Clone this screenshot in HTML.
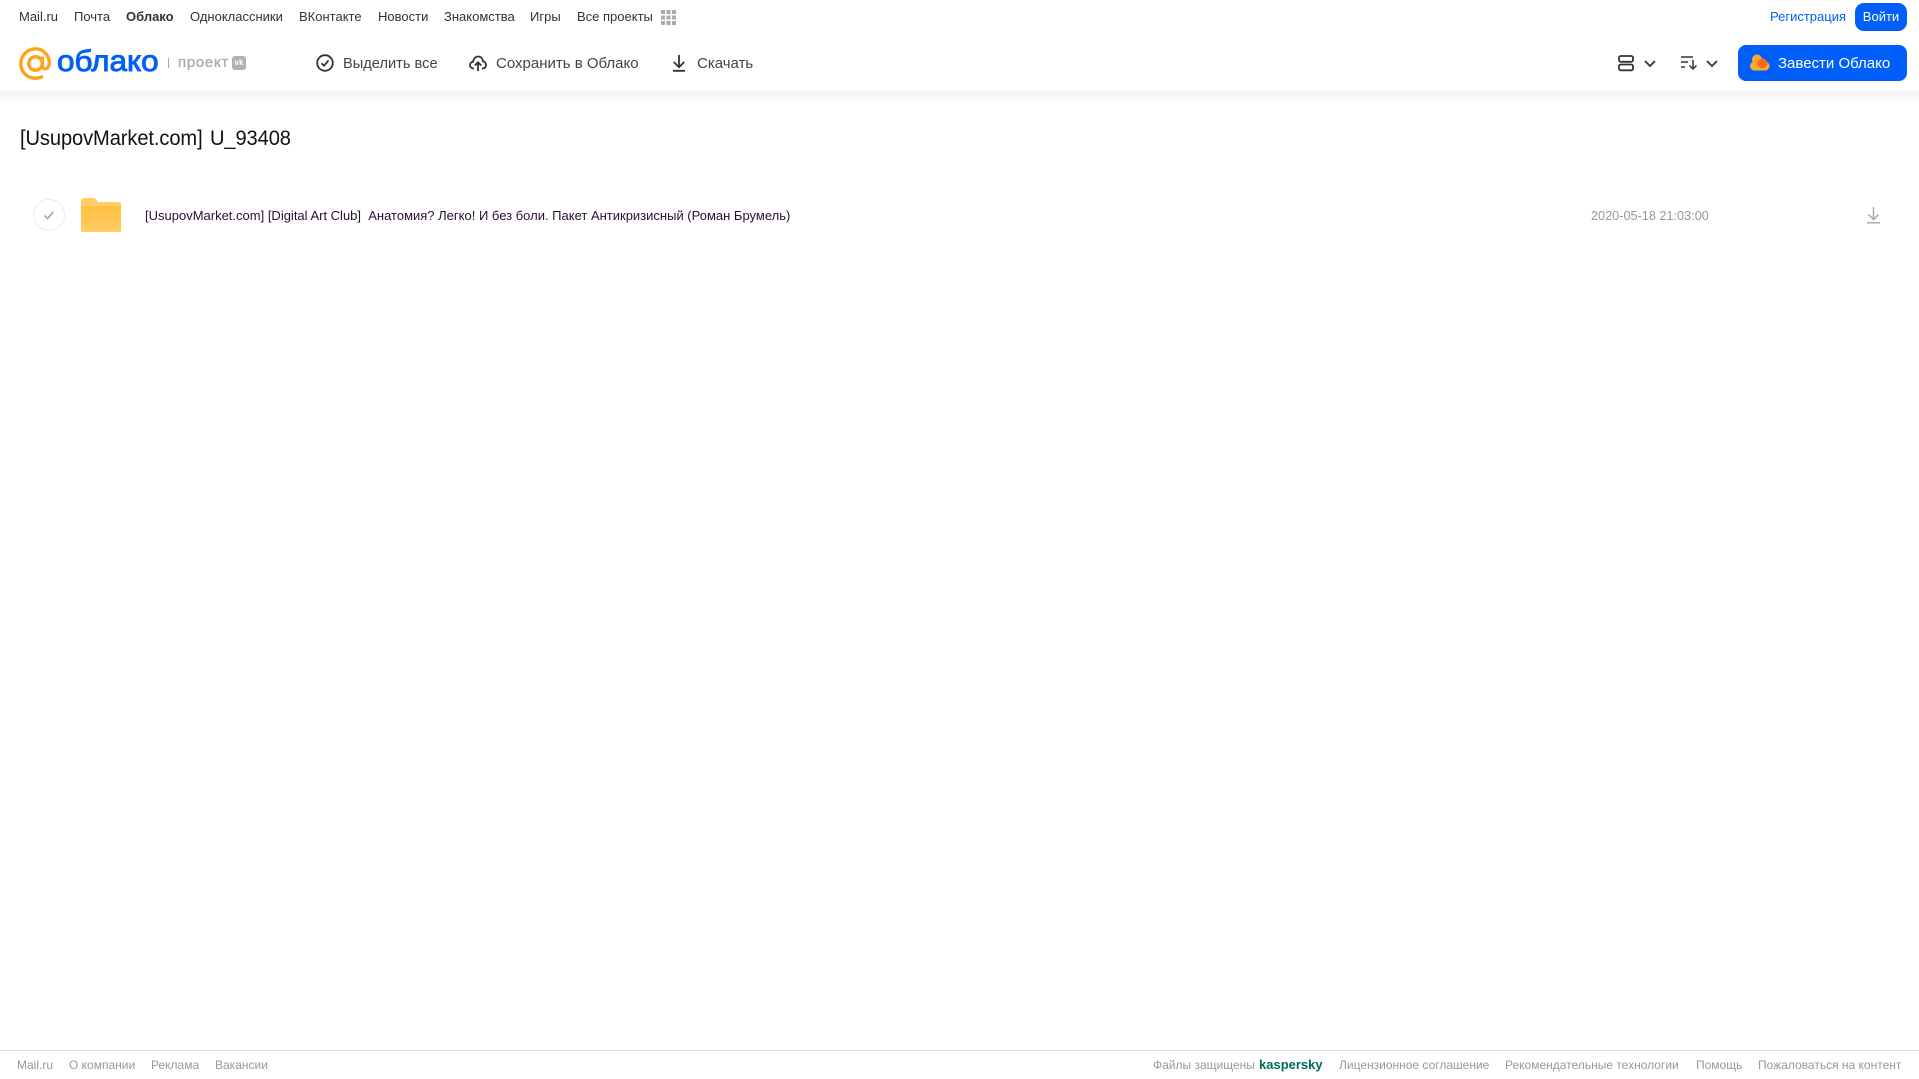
<!DOCTYPE html>
<html lang="ru"><head><meta charset="utf-8"><title>Облако</title>
<style>
html,body{margin:0;padding:0;background:#fff}
body{width:1919px;height:1079px;position:relative;overflow:hidden;font-family:"Liberation Sans",sans-serif}
.t{position:absolute;white-space:nowrap;transform-origin:0 50%;line-height:20px}
.n{top:7px;font-size:13px;color:#333}
.b{top:54px;font-size:15px;color:#444}
.f{top:1055px;font-size:12px;color:#999}
svg{position:absolute;overflow:visible}
</style></head><body>
<div style="position:absolute;left:0;top:91px;width:1919px;height:12px;background:linear-gradient(#f4f4f4,#fff)"></div>

<span class="t n" style="left:19px">Mail.ru</span>
<span class="t n" style="left:74px">Почта</span>
<span class="t n" style="left:126px;font-weight:bold">Облако</span>
<span class="t n" style="left:190px">Одноклассники</span>
<span class="t n" style="left:299px">ВКонтакте</span>
<span class="t n" style="left:378px">Новости</span>
<span class="t n" style="left:444px">Знакомства</span>
<span class="t n" style="left:530px">Игры</span>
<span class="t n" style="left:577px">Все проекты</span>
<svg style="left:661px;top:10px" width="15" height="15" fill="#aaa"><rect width="4" height="4"/><rect x="5.500" width="4" height="4"/><rect x="11" width="4" height="4"/><rect y="5.500" width="4" height="4"/><rect x="5.500" y="5.500" width="4" height="4"/><rect x="11" y="5.500" width="4" height="4"/><rect y="11" width="4" height="4"/><rect x="5.500" y="11" width="4" height="4"/><rect x="11" y="11" width="4" height="4"/></svg>

<svg style="left:19px;top:47px" width="33" height="33" viewBox="0 0 33 33" fill="none" stroke="#ffa31a" stroke-width="3.400"><circle cx="16.500" cy="16.500" r="6.800"/><path d="M23.300 9.500v9c0 5 7 4.500 7-2.500C30.300 8 24 1.800 16.500 1.800S1.800 8 1.800 16.500 8 31.200 16.500 31.200c3 0 5.300-.8 7.300-2"/></svg>
<span class="t" style="left:57px;top:44px;font-size:30px;line-height:36px;color:#005ff9;-webkit-text-stroke:.9px #005ff9;transform:scaleX(1.05)">облако</span>
<div style="position:absolute;left:168px;top:58px;width:1px;height:10px;background:#aaa"></div>
<span class="t" style="left:178px;top:53px;font-size:15px;color:#aaa;-webkit-text-stroke:.3px #aaa;letter-spacing:.7px">проект</span>
<div style="position:absolute;left:232px;top:56px;width:14px;height:14px;border-radius:3px;background:#b2b2b2;color:#fff;font:bold 8px/14px 'Liberation Sans',sans-serif;text-align:center">vk</div>

<svg style="left:316px;top:54px" width="18" height="18" fill="none" stroke="#333" stroke-width="1.800"><circle cx="9" cy="9" r="7.800"/><path d="M5.500 9.300 8 11.700 12.500 6.500"/></svg>
<span class="t b" style="left:343px;transform:scaleX(.975)">Выделить все</span>
<svg style="left:469px;top:54px" width="18" height="18" fill="none" stroke="#333" stroke-width="1.800"><path d="M5 14.500H4.500C2.500 14.500 1 13 1 11.200S2.300 8 4 7.800C4.500 4.800 6.500 2.500 9.200 2.500c2.600 0 4.400 2 4.800 4.800 1.800.3 3 1.900 3 3.800 0 1.800-1.400 3.400-3.400 3.400H13"/><path d="M9 17V8.500M5.800 11.500 9 8.300l3.200 3.200"/></svg>
<span class="t b" style="left:496px">Сохранить в Облако</span>
<svg style="left:672px;top:54px" width="14" height="18" fill="none" stroke="#333" stroke-width="1.800"><path d="M7 1v12M1.800 8 7 13.200 12.200 8M1 16.800h12"/></svg>
<span class="t b" style="left:697px">Скачать</span>

<svg style="left:1618px;top:55px" width="16" height="16" fill="none" stroke="#333" stroke-width="1.800"><rect x="1" y="1" width="14" height="5.800" rx="1.800"/><rect x="1" y="9.500" width="14" height="5.800" rx="1.800"/></svg>
<svg style="left:1644px;top:60px" width="12" height="7" fill="none" stroke="#333" stroke-width="1.800"><path d="M1 1l5 5 5-5"/></svg>
<svg style="left:1681px;top:56px" width="16" height="14" fill="none" stroke="#333" stroke-width="1.500"><path d="M0 1h12M0 6h7M0 11h4M12 4v9M8.500 9.500 12 13l3.500-3.500"/></svg>
<svg style="left:1706px;top:60px" width="12" height="7" fill="none" stroke="#333" stroke-width="1.800"><path d="M1 1l5 5 5-5"/></svg>

<span class="t" style="left:1770px;top:7px;font-size:13px;color:#005ff9">Регистрация</span>
<div style="position:absolute;left:1855px;top:3px;width:52px;height:28px;border-radius:9px;background:#005ff9;color:#fff;font-size:13px;line-height:28px;text-align:center">Войти</div>
<div style="position:absolute;left:1738px;top:45px;width:169px;height:36px;border-radius:8px;background:#005ff9"></div>
<svg style="left:1750px;top:54px" width="20" height="18"><circle cx="7" cy="5.500" r="5" fill="#ffa930"/><circle cx="4.500" cy="12" r="4.500" fill="#ffa930"/><circle cx="15" cy="12" r="4.500" fill="#ffa930"/><rect x="4" y="9" width="12" height="7.500" fill="#ffa930"/><circle cx="12.500" cy="9.500" r="5" fill="#ff6a1a"/></svg>
<span class="t" style="left:1778px;top:54px;font-size:15px;color:#fff">Завести Облако</span>

<span class="t" style="left:20px;top:126px;font-size:21px;line-height:26px;color:#111;letter-spacing:-.1px;word-spacing:2px;transform:scaleX(.957)">[UsupovMarket.com] U_93408</span>

<svg style="left:32px;top:198px" width="34" height="34"><circle cx="17" cy="17" r="15.500" fill="#fff" stroke="#ececec"/><path d="M12.500 17.500 15.500 20.500 21.500 13.800" fill="none" stroke="#a0a0a0" stroke-width="1.500"/></svg>
<svg style="left:81px;top:198px" width="40" height="34"><defs><linearGradient id="g" x1="0" y1="0" x2="0" y2="1"><stop offset="0" stop-color="#ffc03f"/><stop offset="1" stop-color="#ffcc66"/></linearGradient></defs><path d="M3 0h9c2 0 3 .8 4 2.500L17 4h21a2 2 0 0 1 2 2v4H0V3a3 3 0 0 1 3-3z" fill="#ffcd68"/><path d="M0 8h40v24a2 2 0 0 1-2 2H2a2 2 0 0 1-2-2z" fill="url(#g)"/></svg>
<span class="t" style="left:145px;top:206px;font-size:13px;color:#2a1030;white-space:pre">[UsupovMarket.com] [Digital Art Club]  Анатомия? Легко! И без боли. Пакет Антикризисный (Роман Брумель)</span>
<span class="t" style="left:1591px;top:206px;font-size:12.700px;color:#999">2020-05-18 21:03:00</span>
<svg style="left:1867px;top:206px" width="13" height="18" fill="none" stroke="#a5a5a5" stroke-width="1.400"><path d="M6.500 1v12M1.500 8.500 6.500 13.500l5-5M0 16.800h13"/></svg>

<div style="position:absolute;left:0;top:1050px;width:1919px;height:1px;background:#ddd"></div>
<span class="t f" style="left:17px">Mail.ru</span>
<span class="t f" style="left:69px">О компании</span>
<span class="t f" style="left:151px">Реклама</span>
<span class="t f" style="left:215px">Вакансии</span>
<span class="t f" style="left:1153px">Файлы защищены</span>
<span class="t f" style="left:1259px;font-weight:bold;color:#006d5c;font-size:13px">kaspersky</span>
<span class="t f" style="left:1339px">Лицензионное соглашение</span>
<span class="t f" style="left:1505px">Рекомендательные технологии</span>
<span class="t f" style="left:1696px">Помощь</span>
<span class="t f" style="left:1758px">Пожаловаться на контент</span>
</body></html>
